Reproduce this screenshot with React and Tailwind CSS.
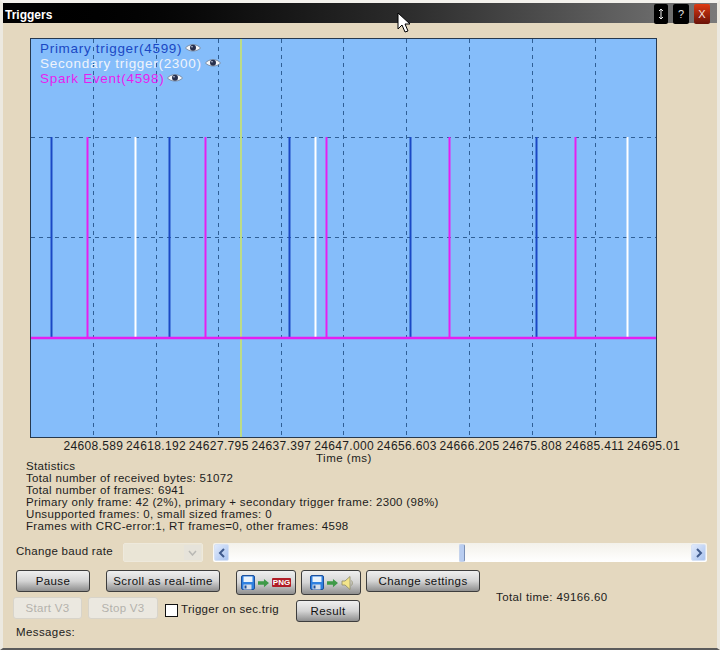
const grid = [93, 156, 218, 281, 343, 406, 469, 532, 595];
const bars = [
  [51, "#1a48c4"], [87, "#e61ef0"], [135, "#ffffff"], [169, "#1a48c4"], [205, "#e61ef0"],
  [289, "#1a48c4"], [315, "#ffffff"], [326, "#e61ef0"], [410, "#1a48c4"], [449, "#e61ef0"],
  [536, "#1a48c4"], [575, "#e61ef0"], [627, "#ffffff"],
];
const axis = ["24608.589", "24618.192", "24627.795", "24637.397", "24647.000", "24656.603", "24666.205", "24675.808", "24685.411"];

function Eye() {
  return (
    <svg width="16" height="10" viewBox="0 0 16 10" className="ml-[3px] mb-[2px] shrink-0">
      <path d="M0.5 5 C4 0.5 12 0.5 15.5 5 C12 9 4 9 0.5 5Z" fill="#f4f6fa" stroke="#6b7280" strokeWidth="0.7" />
      <circle cx="8" cy="4.8" r="3" fill="#27304f" />
      <circle cx="7" cy="3.8" r="0.8" fill="#cfd8ea" />
    </svg>
  );
}

function Btn({ children, className }) {
  return (
    <button className={"h-[22px] shrink-0 rounded-[3px] border border-[#3d3d3d] bg-gradient-to-b from-[#efefef] via-[#d4d4d4] to-[#8f8f8f] pt-[1px] text-[11.5px] tracking-[0.4px] text-[#111] " + className}>
      {children}
    </button>
  );
}

function Disabled({ children, className }) {
  return (
    <button className={"h-[22px] shrink-0 rounded-[3px] border border-[#d8d4ca] bg-[#ebe8e0] pt-[1px] text-[11.5px] tracking-[0.3px] text-[#b4b2ac] " + className}>
      {children}
    </button>
  );
}

function Floppy() {
  return (
    <svg width="14" height="15" viewBox="0 0 14 15" className="shrink-0">
      <rect x="0.5" y="0.5" width="13" height="14" rx="1.5" fill="#2f80e0" stroke="#1c4f9c" />
      <rect x="2.5" y="1.5" width="9" height="5.5" fill="#eaf2fb" />
      <rect x="2.5" y="9.5" width="8" height="5" fill="#d8dee8" />
      <rect x="3.5" y="10.5" width="2" height="3" fill="#1c4f9c" />
    </svg>
  );
}

function Arrow() {
  return (
    <svg width="11" height="10" viewBox="0 0 12 10" className="shrink-0">
      <path d="M0 3.2H6.5V0.5L12 5L6.5 9.5V6.8H0Z" fill="#3f9a48" />
    </svg>
  );
}

function Chevron({ dir }) {
  return (
    <button className="flex h-[17px] w-[15px] shrink-0 items-center justify-center rounded-[2px] border border-[#d7e2f5] bg-gradient-to-br from-[#e1eafb] to-[#a9c3ef]">
      <svg width="8" height="10" viewBox="0 0 8 10">
        <path d={dir === "l" ? "M6 1L2 5L6 9" : "M2 1L6 5L2 9"} fill="none" stroke="#3f5a8c" strokeWidth="2" />
      </svg>
    </button>
  );
}

export default function App() {
  return (
    <div
      className="relative flex h-[650px] w-[720px] flex-col overflow-hidden border-x-[3px] border-t-[3px] border-b-[2px] border-x-[#ece9e0] border-t-[#f3f1ec] border-b-[#5b5b5b] bg-[#e4d8bf] text-[11.5px] text-[#1c1c1c]"
      style={{ fontFamily: '"Liberation Sans", Arial, sans-serif' }}
    >
      <div className="flex h-[20px] shrink-0 items-center justify-between bg-gradient-to-r from-[#000000] via-[#2a2a2a] via-55% to-[#7a7a7a] pl-[2px] pr-[7px]">
        <span className="pt-[3px] text-[12px] font-bold text-white">Triggers</span>
        <div className="mt-[2px] flex h-[20px] items-center">
          <button className="flex h-[20px] w-[14px] items-center justify-center rounded-[2px] bg-black">
            <svg width="6" height="12" viewBox="0 0 6 12">
              <path d="M3 1V11M1 3L3 1L5 3M1 9L3 11L5 9" fill="none" stroke="#f2f2f2" strokeWidth="1" />
            </svg>
          </button>
          <button className="ml-[5px] h-[20px] w-[16px] rounded-[2px] bg-black text-[11px] text-[#e5e5e5]">?</button>
          <button className="ml-[5px] h-[20px] w-[16px] rounded-[2px] bg-gradient-to-b from-[#e03a10] to-[#6a1208] text-[11px] text-[#f5e5e0]">X</button>
        </div>
      </div>

      <div className="relative ml-[27px] mt-[15px] h-[400px] w-[627px] shrink-0 border border-[#26394f] bg-[#85bdfa]">
        <svg width="625" height="398" viewBox="31 39 625 398" className="block">
          {grid.map((x) => (
            <line key={x} x1={x + 0.5} x2={x + 0.5} y1="39" y2="437" stroke="#2f5f96" strokeDasharray="4 4" />
          ))}
          {[137.5, 237.5].map((y) => (
            <line key={y} x1="31" x2="657" y1={y} y2={y} stroke="#2f5f96" strokeDasharray="4 4" />
          ))}
          <line x1="241" x2="241" y1="39" y2="437" stroke="#bcdc88" strokeWidth="2" />
          {bars.map(([x, c]) => (
            <line key={x} x1={x + 0.5} x2={x + 0.5} y1="137" y2="338" stroke={c} strokeWidth="2" />
          ))}
          <line x1="31" x2="657" y1="338" y2="338" stroke="#e61ef0" strokeWidth="2.5" />
        </svg>
        <div className="absolute left-[9px] top-[2px] flex flex-col text-[13.5px] leading-[15px] tracking-[0.7px]">
          <div className="flex items-center text-[#1a48c4]">Primary trigger(4599)<Eye /></div>
          <div className="flex items-center text-[#f0f4fa]">Secondary trigger(2300)<Eye /></div>
          <div className="flex items-center text-[#e61ef0]">Spark Event(4598)<Eye /></div>
        </div>
      </div>

      <div className="ml-[59px] mt-[1px] flex h-[13px] shrink-0 text-[12px] leading-[14px] tracking-[0.35px] text-[#1c1c1c]">
        {axis.map((t) => (
          <span key={t} className="w-[62.7px] shrink-0 whitespace-nowrap text-center">{t}</span>
        ))}
        <span className="w-[54.7px] shrink-0 whitespace-nowrap text-center">24695.01</span>
      </div>
      <div className="h-[8px] shrink-0 pl-[313px] text-[11.5px] leading-[12px] tracking-[0.5px]">Time (ms)</div>

      <div className="ml-[23px] flex shrink-0 flex-col text-[11.5px] leading-[12px] tracking-[0.33px]">
        <span>Statistics</span>
        <span>Total number of received bytes: 51072</span>
        <span>Total number of frames: 6941</span>
        <span>Primary only frame: 42 (2%), primary + secondary trigger frame: 2300 (98%)</span>
        <span>Unsupported frames: 0, small sized frames: 0</span>
        <span>Frames with CRC-error:1, RT frames=0, other frames: 4598</span>
      </div>

      <div className="mt-[11px] flex h-[19px] shrink-0 items-center pl-[13px]">
        <span className="w-[107px] pb-[1px] tracking-[0.3px]">Change baud rate</span>
        <div className="flex h-[19px] w-[80px] items-center justify-end rounded-[2px] border border-[#eee9dc] bg-[#eae5d6] pr-[1px]">
          <div className="flex h-[15px] w-[17px] items-center justify-center bg-[#e6e3da]">
            <svg width="9" height="6" viewBox="0 0 9 6">
              <path d="M1 1L4.5 5L8 1" fill="none" stroke="#b8b8b4" strokeWidth="1.5" />
            </svg>
          </div>
        </div>
        <div className="ml-[10px] flex h-[19px] w-[494px] items-center rounded-[2px] bg-gradient-to-b from-[#f3f1ea] to-[#ffffff] pl-[1px] pr-[1px]">
          <Chevron dir="l" />
          <div className="w-[230px]" />
          <div className="h-[18px] w-[6px] rounded-[2px] border border-[#c5d3ec] border-r-[#7a8fb5] bg-[#b9cdf0]" />
          <div className="flex-1" />
          <Chevron dir="r" />
        </div>
      </div>

      <div className="mt-[8px] flex h-[27px] shrink-0 items-start pl-[13px]">
        <Btn className="w-[74px]">Pause</Btn>
        <Btn className="ml-[16px] w-[114px]">Scroll as real-time</Btn>
        <button className="ml-[16px] flex h-[25px] w-[60px] shrink-0 items-center justify-center gap-[3px] rounded-[3px] border border-[#3d3d3d] bg-gradient-to-b from-[#efefef] via-[#d4d4d4] to-[#8f8f8f]">
          <Floppy />
          <Arrow />
          <span className="rounded-[1px] bg-[#b01c26] px-[1px] text-[8px] font-bold leading-[9px] text-white">PNG</span>
        </button>
        <button className="ml-[5px] flex h-[25px] w-[60px] shrink-0 items-center justify-center gap-[3px] rounded-[3px] border border-[#3d3d3d] bg-gradient-to-b from-[#efefef] via-[#d4d4d4] to-[#8f8f8f]">
          <Floppy />
          <Arrow />
          <svg width="12" height="16" viewBox="0 0 12 16" className="shrink-0">
            <path d="M1 6H4L9 1.5V14.5L4 10H1Z" fill="#f3e58a" stroke="#8d8a64" strokeWidth="0.8" />
            <path d="M10.5 5.5C11.5 7 11.5 9 10.5 10.5" fill="none" stroke="#8d8a64" strokeWidth="0.8" />
          </svg>
        </button>
        <Btn className="ml-[5px] w-[114px]">Change settings</Btn>
        <span className="ml-[16px] mt-[19px] whitespace-nowrap tracking-[0.4px]">Total time: 49166.60</span>
      </div>

      <div className="flex h-[27px] shrink-0 items-start pl-[10px]">
        <Disabled className="w-[69px]">Start V3</Disabled>
        <Disabled className="ml-[6px] w-[70px]">Stop V3</Disabled>
        <div className="ml-[7px] mt-[7px] h-[13px] w-[13px] shrink-0 border border-[#111] bg-white" />
        <span className="ml-[3px] mt-[4px] w-[115px] shrink-0 whitespace-nowrap tracking-[0.3px]">Trigger on sec.trig</span>
        <Btn className="mt-[3px] w-[64px]">Result</Btn>
      </div>

      <div className="pl-[13px] pt-[1px] leading-[14px] tracking-[0.4px]">Messages:</div>

      <svg width="14" height="22" viewBox="0 0 14 22" className="absolute left-[394px] top-[9px]">
        <path d="M1 1V17L5 13L8 20L11 19L8 12H13Z" fill="#ffffff" stroke="#000000" strokeWidth="1" />
      </svg>
    </div>
  );
}
